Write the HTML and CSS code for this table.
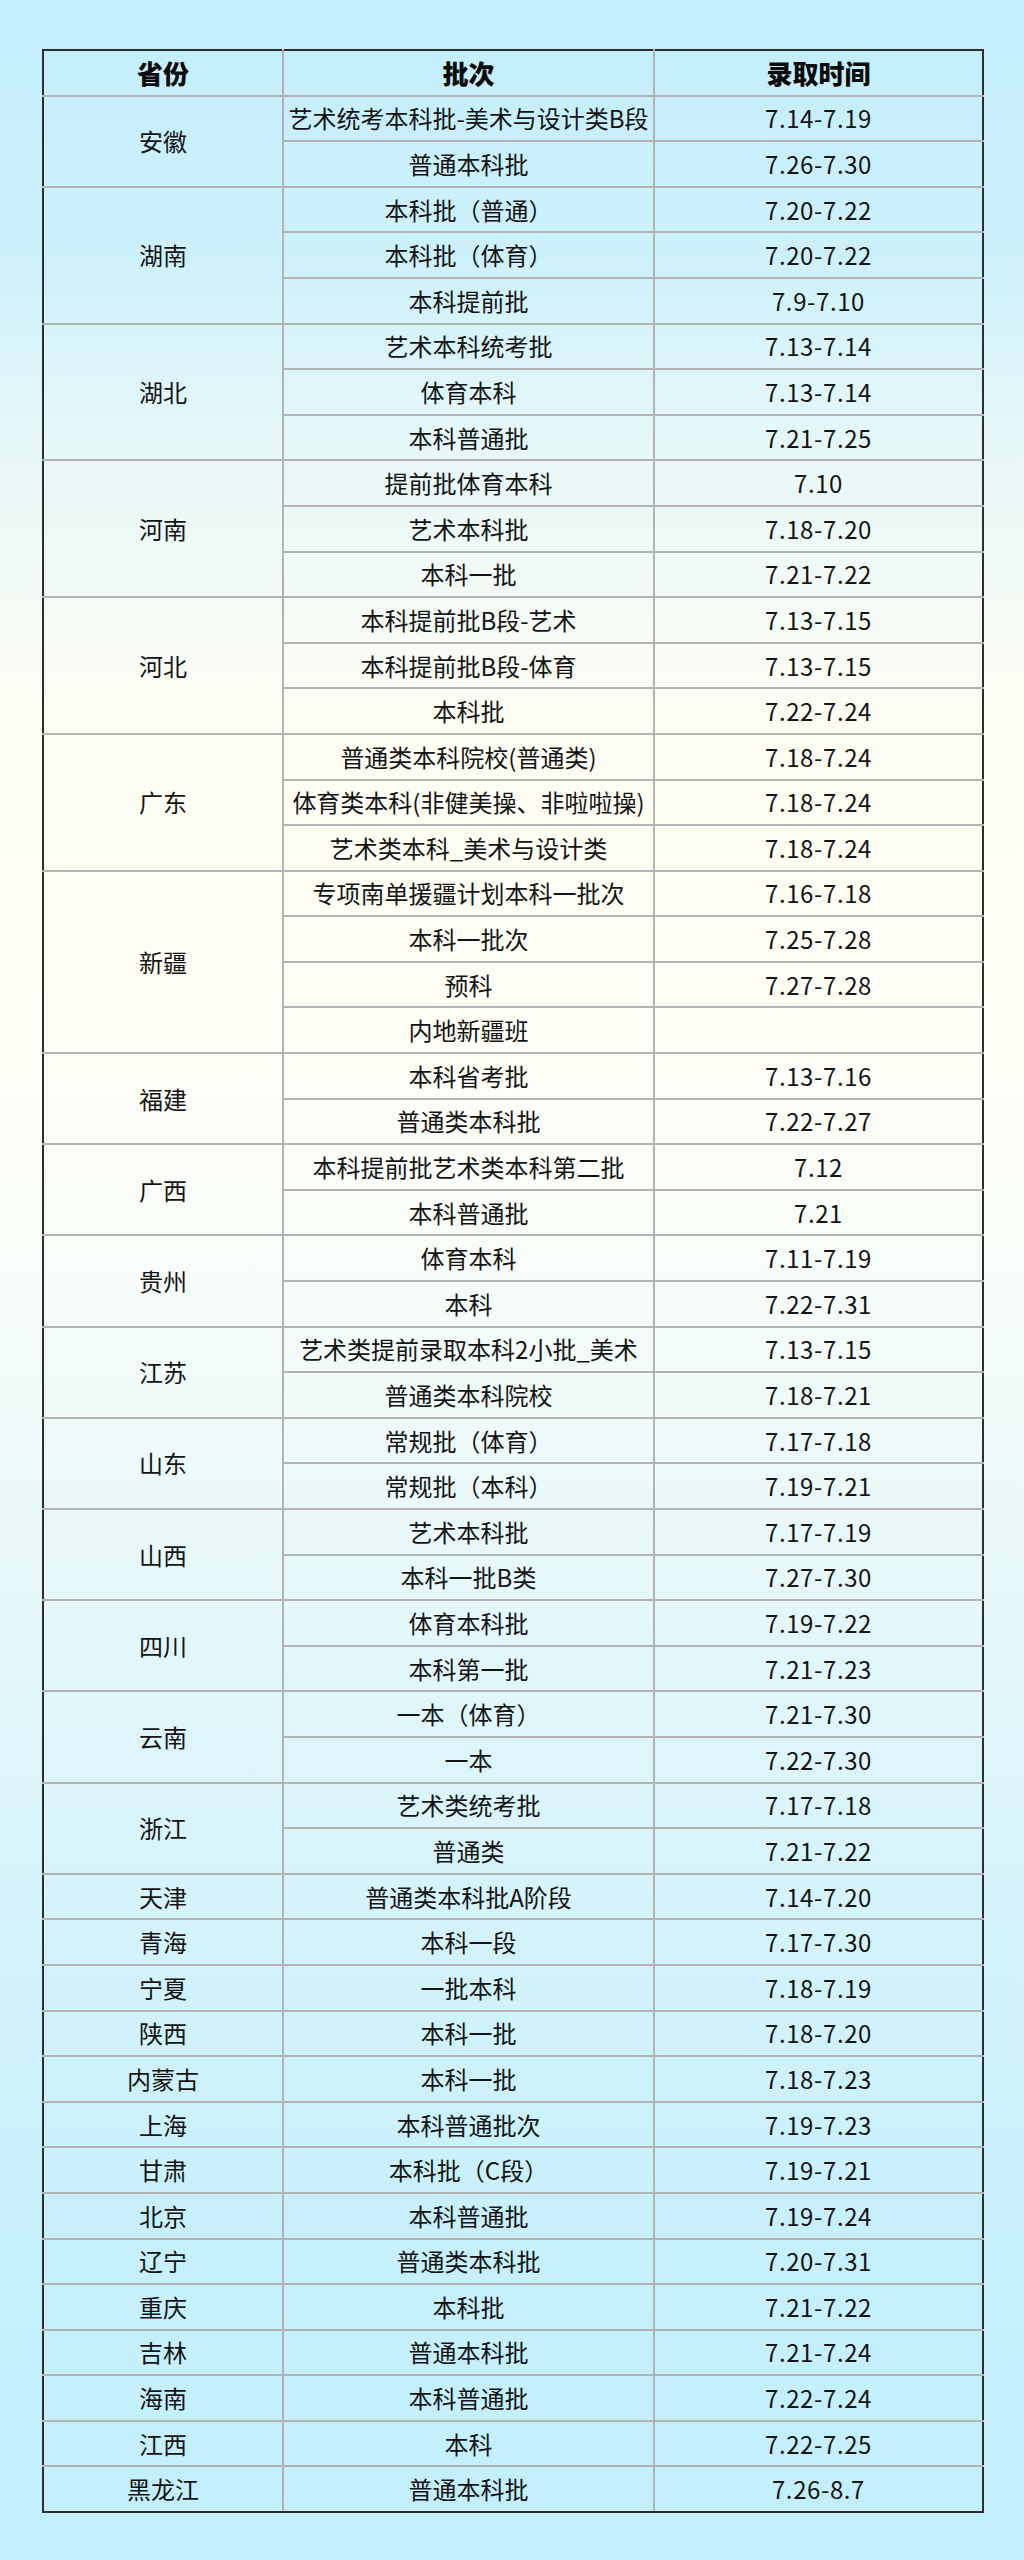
FILE: index.html
```html
<!DOCTYPE html>
<html lang="zh-CN">
<head>
<meta charset="utf-8">
<title>录取时间</title>
<link rel="stylesheet" href="styles.css">
</head>
<body>
<main class="page">
<table class="sched">
<colgroup><col class="c1"><col class="c2"><col class="c3"></colgroup>
<thead>
<tr><th>省份</th><th>批次</th><th>录取时间</th></tr>
</thead>
<tbody>
<tr><td rowspan="2">安徽</td><td>艺术统考本科批-美术与设计类B段</td><td class="num">7.14-7.19</td></tr>
<tr><td>普通本科批</td><td class="num">7.26-7.30</td></tr>
<tr><td rowspan="3">湖南</td><td>本科批（普通）</td><td class="num">7.20-7.22</td></tr>
<tr><td>本科批（体育）</td><td class="num">7.20-7.22</td></tr>
<tr><td>本科提前批</td><td class="num">7.9-7.10</td></tr>
<tr><td rowspan="3">湖北</td><td>艺术本科统考批</td><td class="num">7.13-7.14</td></tr>
<tr><td>体育本科</td><td class="num">7.13-7.14</td></tr>
<tr><td>本科普通批</td><td class="num">7.21-7.25</td></tr>
<tr><td rowspan="3">河南</td><td>提前批体育本科</td><td class="num">7.10</td></tr>
<tr><td>艺术本科批</td><td class="num">7.18-7.20</td></tr>
<tr><td>本科一批</td><td class="num">7.21-7.22</td></tr>
<tr><td rowspan="3">河北</td><td>本科提前批B段-艺术</td><td class="num">7.13-7.15</td></tr>
<tr><td>本科提前批B段-体育</td><td class="num">7.13-7.15</td></tr>
<tr><td>本科批</td><td class="num">7.22-7.24</td></tr>
<tr><td rowspan="3">广东</td><td>普通类本科院校(普通类)</td><td class="num">7.18-7.24</td></tr>
<tr><td>体育类本科(非健美操、非啦啦操)</td><td class="num">7.18-7.24</td></tr>
<tr><td>艺术类本科_美术与设计类</td><td class="num">7.18-7.24</td></tr>
<tr><td rowspan="4">新疆</td><td>专项南单援疆计划本科一批次</td><td class="num">7.16-7.18</td></tr>
<tr><td>本科一批次</td><td class="num">7.25-7.28</td></tr>
<tr><td>预科</td><td class="num">7.27-7.28</td></tr>
<tr><td>内地新疆班</td><td class="num"></td></tr>
<tr><td rowspan="2">福建</td><td>本科省考批</td><td class="num">7.13-7.16</td></tr>
<tr><td>普通类本科批</td><td class="num">7.22-7.27</td></tr>
<tr><td rowspan="2">广西</td><td>本科提前批艺术类本科第二批</td><td class="num">7.12</td></tr>
<tr><td>本科普通批</td><td class="num">7.21</td></tr>
<tr><td rowspan="2">贵州</td><td>体育本科</td><td class="num">7.11-7.19</td></tr>
<tr><td>本科</td><td class="num">7.22-7.31</td></tr>
<tr><td rowspan="2">江苏</td><td>艺术类提前录取本科2小批_美术</td><td class="num">7.13-7.15</td></tr>
<tr><td>普通类本科院校</td><td class="num">7.18-7.21</td></tr>
<tr><td rowspan="2">山东</td><td>常规批（体育）</td><td class="num">7.17-7.18</td></tr>
<tr><td>常规批（本科）</td><td class="num">7.19-7.21</td></tr>
<tr><td rowspan="2">山西</td><td>艺术本科批</td><td class="num">7.17-7.19</td></tr>
<tr><td>本科一批B类</td><td class="num">7.27-7.30</td></tr>
<tr><td rowspan="2">四川</td><td>体育本科批</td><td class="num">7.19-7.22</td></tr>
<tr><td>本科第一批</td><td class="num">7.21-7.23</td></tr>
<tr><td rowspan="2">云南</td><td>一本（体育）</td><td class="num">7.21-7.30</td></tr>
<tr><td>一本</td><td class="num">7.22-7.30</td></tr>
<tr><td rowspan="2">浙江</td><td>艺术类统考批</td><td class="num">7.17-7.18</td></tr>
<tr><td>普通类</td><td class="num">7.21-7.22</td></tr>
<tr><td>天津</td><td>普通类本科批A阶段</td><td class="num">7.14-7.20</td></tr>
<tr><td>青海</td><td>本科一段</td><td class="num">7.17-7.30</td></tr>
<tr><td>宁夏</td><td>一批本科</td><td class="num">7.18-7.19</td></tr>
<tr><td>陕西</td><td>本科一批</td><td class="num">7.18-7.20</td></tr>
<tr><td>内蒙古</td><td>本科一批</td><td class="num">7.18-7.23</td></tr>
<tr><td>上海</td><td>本科普通批次</td><td class="num">7.19-7.23</td></tr>
<tr><td>甘肃</td><td>本科批（C段）</td><td class="num">7.19-7.21</td></tr>
<tr><td>北京</td><td>本科普通批</td><td class="num">7.19-7.24</td></tr>
<tr><td>辽宁</td><td>普通类本科批</td><td class="num">7.20-7.31</td></tr>
<tr><td>重庆</td><td>本科批</td><td class="num">7.21-7.22</td></tr>
<tr><td>吉林</td><td>普通本科批</td><td class="num">7.21-7.24</td></tr>
<tr><td>海南</td><td>本科普通批</td><td class="num">7.22-7.24</td></tr>
<tr><td>江西</td><td>本科</td><td class="num">7.22-7.25</td></tr>
<tr><td>黑龙江</td><td>普通本科批</td><td class="num">7.26-8.7</td></tr>
</tbody>
</table>
</main>
</body>
</html>
```

FILE: styles.css
```css
html, body {
  margin: 0;
  padding: 0;
}
body {
  width: 1024px;
  min-height: 2560px;
  background: linear-gradient(180deg,
    #c3eefc 0%,
    #cdf1fb 10%,
    #e8f8f8 18%,
    #fdfdf3 28%,
    #fffef6 40%,
    #f6fcf8 50%,
    #e6f8fa 62%,
    #d4f3fb 75%,
    #c6f0fc 88%,
    #c3effd 100%);
  font-family: "Noto Sans CJK SC", "Noto Sans", sans-serif;
  color: #141414;
}
.page {
  padding: 49px 0 0 42px;
}
.sched {
  border-collapse: collapse;
  table-layout: fixed;
  width: 940px;
  border: 2px solid #2e2e2e;
}
.c1 { width: 240px; }
.c2 { width: 371px; }
.c3 { width: 329px; }
.sched th,
.sched td {
  border: 2px solid #b3b3b3;
  height: 43.6px;
  padding: 0;
  text-align: center;
  vertical-align: middle;
  font-size: 24px;
  line-height: 30px;
  white-space: nowrap;
  overflow: hidden;
}
.sched th {
  font-size: 26px;
  font-weight: 900;
  color: #0c0c0c;
}
.sched tr > :first-child { border-left-color: #2e2e2e; }
.sched tr > :last-child { border-right-color: #2e2e2e; }
.sched thead th { border-top-color: #2e2e2e; }
.sched tbody tr:last-child td { border-bottom-color: #2e2e2e; }
.sched td.num {
  letter-spacing: 0.6px;
}
```
